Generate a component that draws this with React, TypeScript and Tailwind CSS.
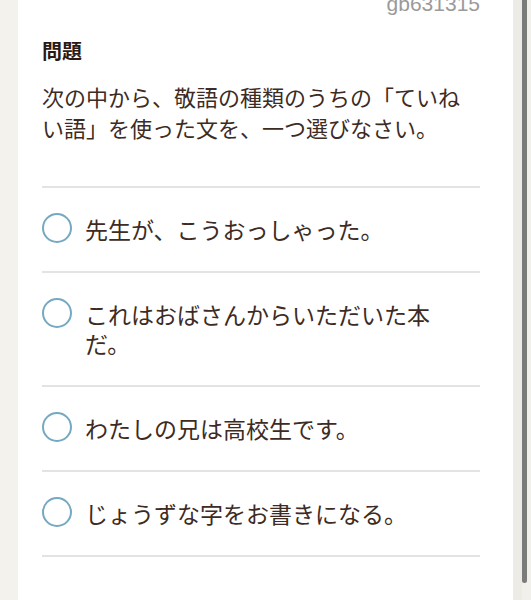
import React from 'react';

const options = [
  '先生が、こうおっしゃった。',
  'これはおばさんからいただいた本だ。',
  'わたしの兄は高校生です。',
  'じょうずな字をお書きになる。',
];

export default function App() {
  return (
    <div
      className="flex h-[600px] w-full overflow-hidden bg-[#f3f2ec]"
      style={{ fontFamily: '"Noto Sans CJK JP", "Noto Sans", sans-serif' }}
    >
      <div className="w-[18px] shrink-0 bg-[#f3f2ec]"></div>

      <div className="w-[495px] shrink-0 bg-white pl-[24px] pr-[33px]">
        <div
          className="-mt-[8px] text-right text-[21px] leading-[24px] text-[#9a9a9a]"
          style={{ fontFamily: '"Liberation Sans", Arial, sans-serif' }}
        >
          gb631315
        </div>

        <h2 className="mt-[22px] text-[20px] font-bold leading-[26px] text-[#2b1a14]">問題</h2>

        <p className="mt-[17px] pb-[43px] text-[22px] leading-[31px] text-[#3d2b24]">
          次の中から、敬語の種類のうちの「ていねい語」を使った文を、一つ選びなさい。
        </p>

        <ul className="border-t-2 border-[#e3e3e3]">
          {options.map((opt, i) => (
            <li key={i} className="flex items-start border-b-2 border-[#e3e3e3] py-[27px]">
              <span className="-mt-[2px] h-[30px] w-[30px] shrink-0 rounded-full border-2 border-[#74a9c1] bg-white"></span>
              <span className="ml-[13px] pr-[40px] text-[23px] leading-[29px] text-[#3d2b24]">{opt}</span>
            </li>
          ))}
        </ul>
      </div>

      <div className="flex w-[18px] shrink-0 bg-[#f1f0eb]">
        <div className="w-[9px] bg-[#ecebe6]"></div>
        <div className="h-[583px] w-[5px] rounded-b-[3px] bg-[#7b7b79]"></div>
      </div>
    </div>
  );
}
